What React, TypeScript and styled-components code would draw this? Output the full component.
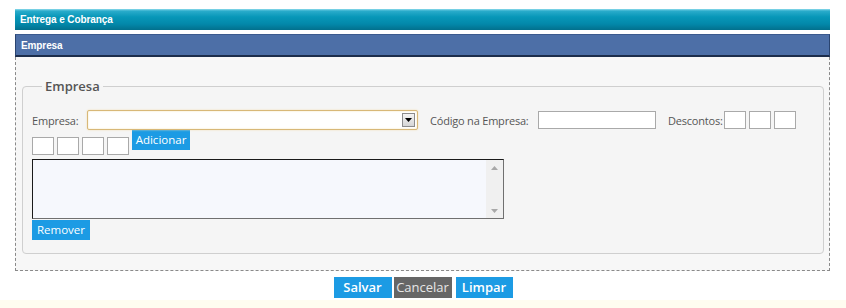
import React from 'react'
import styled, { createGlobalStyle } from 'styled-components'

const GlobalStyle = createGlobalStyle`
  html, body {
    margin: 0;
    padding: 0;
    background: #ffffff;
  }
  * {
    box-sizing: border-box;
  }
`

const Page = styled.div`
  width: 846px;
  padding: 9px 16px 0 15px;
  font-family: 'Open Sans', 'Liberation Sans', sans-serif;
`

const TitleBar = styled.div`
  height: 21px;
  line-height: 21px;
  padding-left: 5px;
  background: linear-gradient(to bottom, #8fdcec 0px, #2aaccb 2px, #0797b8 8px, #0388aa 15px, #02708d 21px);
  color: #ffffff;
  font-family: 'Liberation Sans', Arial, sans-serif;
  font-weight: bold;
  font-size: 10px;
  letter-spacing: -0.1px;
`

const SectionBar = styled.div`
  margin-top: 4px;
  height: 23px;
  line-height: 21px;
  padding-left: 5px;
  background: #4d6fa7;
  border-top: 1px solid #3b5a8e;
  border-left: 1px solid #2a4470;
  border-right: 1px solid #2a4470;
  border-bottom: 2px solid #1c2d4b;
  color: #ffffff;
  font-family: 'Liberation Sans', Arial, sans-serif;
  font-weight: bold;
  font-size: 10px;
  letter-spacing: -0.1px;
`

const Panel = styled.div`
  background: #f7f7f7;
  border: 1px dashed #8a8a8a;
  border-top: none;
  padding: 20px 5px 16px 6px;
`

const Fieldset = styled.fieldset`
  margin: 0;
  border: 1px solid #cfcfcf;
  border-radius: 4px;
  background: #f5f5f5;
  padding: 6px 9px 13px 9px;
  min-width: 0;
`

const Legend = styled.legend`
  margin-left: 10px;
  padding: 0 3px;
  font-size: 13px;
  font-weight: 600;
  color: #555555;
  line-height: 18px;
`

const Row = styled.div<{ $top?: number }>`
  display: flex;
  align-items: center;
  margin-top: ${(p) => p.$top ?? 0}px;
`

const Label = styled.span<{ $w: number; $left?: number }>`
  width: ${(p) => p.$w}px;
  flex: none;
  font-size: 11px;
  letter-spacing: -0.2px;
  color: #555555;
  margin-left: ${(p) => p.$left ?? 0}px;
  white-space: nowrap;
`

const Select = styled.div`
  position: relative;
  width: 331px;
  height: 20px;
  background: #ffffff;
  border: 1px solid #d8b878;
  border-radius: 2px;
  box-shadow: inset 0 0 2px #f3e3b8, 0 0 2px #f1deb0;
`

const ArrowBox = styled.div`
  position: absolute;
  right: 2px;
  top: 2px;
  width: 13px;
  height: 14px;
  border: 1px solid #8c8c8c;
  background: linear-gradient(to bottom, #f4f4f4, #d6d6d6);
  display: flex;
  align-items: center;
  justify-content: center;
`

const Input = styled.div<{ $w: number; $left?: number; $h?: number }>`
  width: ${(p) => p.$w}px;
  height: ${(p) => p.$h ?? 18}px;
  margin-left: ${(p) => p.$left ?? 0}px;
  background: #ffffff;
  border: 1px solid #a9a9a9;
  flex: none;
`

const BlueButton = styled.div<{ $w: number; $big?: boolean }>`
  width: ${(p) => p.$w}px;
  height: ${(p) => (p.$big ? 21 : 20)}px;
  line-height: ${(p) => (p.$big ? 21 : 19)}px;
  background: #1c9be4;
  color: #ffffff;
  text-align: center;
  font-size: ${(p) => (p.$big ? 13 : 11.5)}px;
  font-weight: ${(p) => (p.$big ? 600 : 400)};
  flex: none;
`

const GrayButton = styled(BlueButton)`
  background: #666666;
  color: #e6e6e6;
  font-weight: 400;
`

const Boxes = styled.div`
  display: flex;
  align-items: flex-start;
`

const SmallBoxes = styled.div`
  display: flex;
  gap: 3px;
  margin-top: 7px;
  margin-right: 3px;
`

const ListBox = styled.div`
  margin-top: 4px;
  width: 472px;
  height: 60px;
  display: flex;
  background: #f6f8fd;
  border-top: 1px solid #1a1a1a;
  border-left: 1px solid #1a1a1a;
  border-right: 1px solid #707070;
  border-bottom: 1px solid #707070;
`

const ListBody = styled.div`
  flex: 1;
`

const ScrollBar = styled.div`
  width: 17px;
  background: #f0f0f0;
  display: flex;
  flex-direction: column;
  justify-content: space-between;
  align-items: center;
  padding: 6px 0 5px;
`

const ButtonsBar = styled.div`
  display: flex;
  justify-content: center;
  margin: 6px 0 0 -15px;
  width: 846px;
`

const FooterLine = styled.div`
  margin: 2px 0 0 -15px;
  width: 846px;
  height: 9px;
  background: #fffcf0;
`

const Tri = ({ up, color }: { up?: boolean; color: string }) => (
  <svg width="7" height="4" viewBox="0 0 7 4">
    <path d={up ? 'M0 4 L3.5 0 L7 4 Z' : 'M0 0 L7 0 L3.5 4 Z'} fill={color} />
  </svg>
)

export default function App() {
  return (
    <>
      <GlobalStyle />
      <Page>
        <TitleBar>Entrega e Cobrança</TitleBar>
        <SectionBar>Empresa</SectionBar>
        <Panel>
          <Fieldset>
            <Legend>Empresa</Legend>
            <Row $top={9}>
              <Label $w={55}>Empresa:</Label>
              <Select>
                <ArrowBox>
                  <Tri color="#000000" />
                </ArrowBox>
              </Select>
              <Label $w={108} $left={12}>Código na Empresa:</Label>
              <Input $w={118} />
              <Label $w={56} $left={12}>Descontos:</Label>
              <Input $w={22} />
              <Input $w={22} $left={3} />
              <Input $w={22} $left={3} />
            </Row>
            <Boxes>
              <SmallBoxes>
                <Input $w={22} $h={18} />
                <Input $w={22} $h={18} />
                <Input $w={22} $h={18} />
                <Input $w={22} $h={18} />
              </SmallBoxes>
              <BlueButton $w={58}>Adicionar</BlueButton>
            </Boxes>
            <ListBox>
              <ListBody />
              <ScrollBar>
                <Tri up color="#a8a8a8" />
                <Tri color="#a8a8a8" />
              </ScrollBar>
            </ListBox>
            <Row $top={1}>
              <BlueButton $w={58}>Remover</BlueButton>
            </Row>
          </Fieldset>
        </Panel>
        <ButtonsBar>
          <BlueButton $w={58} $big>Salvar</BlueButton>
          <GrayButton $w={58} $big style={{ marginLeft: 2 }}>Cancelar</GrayButton>
          <BlueButton $w={57} $big style={{ marginLeft: 4 }}>Limpar</BlueButton>
        </ButtonsBar>
        <FooterLine />
      </Page>
    </>
  )
}
